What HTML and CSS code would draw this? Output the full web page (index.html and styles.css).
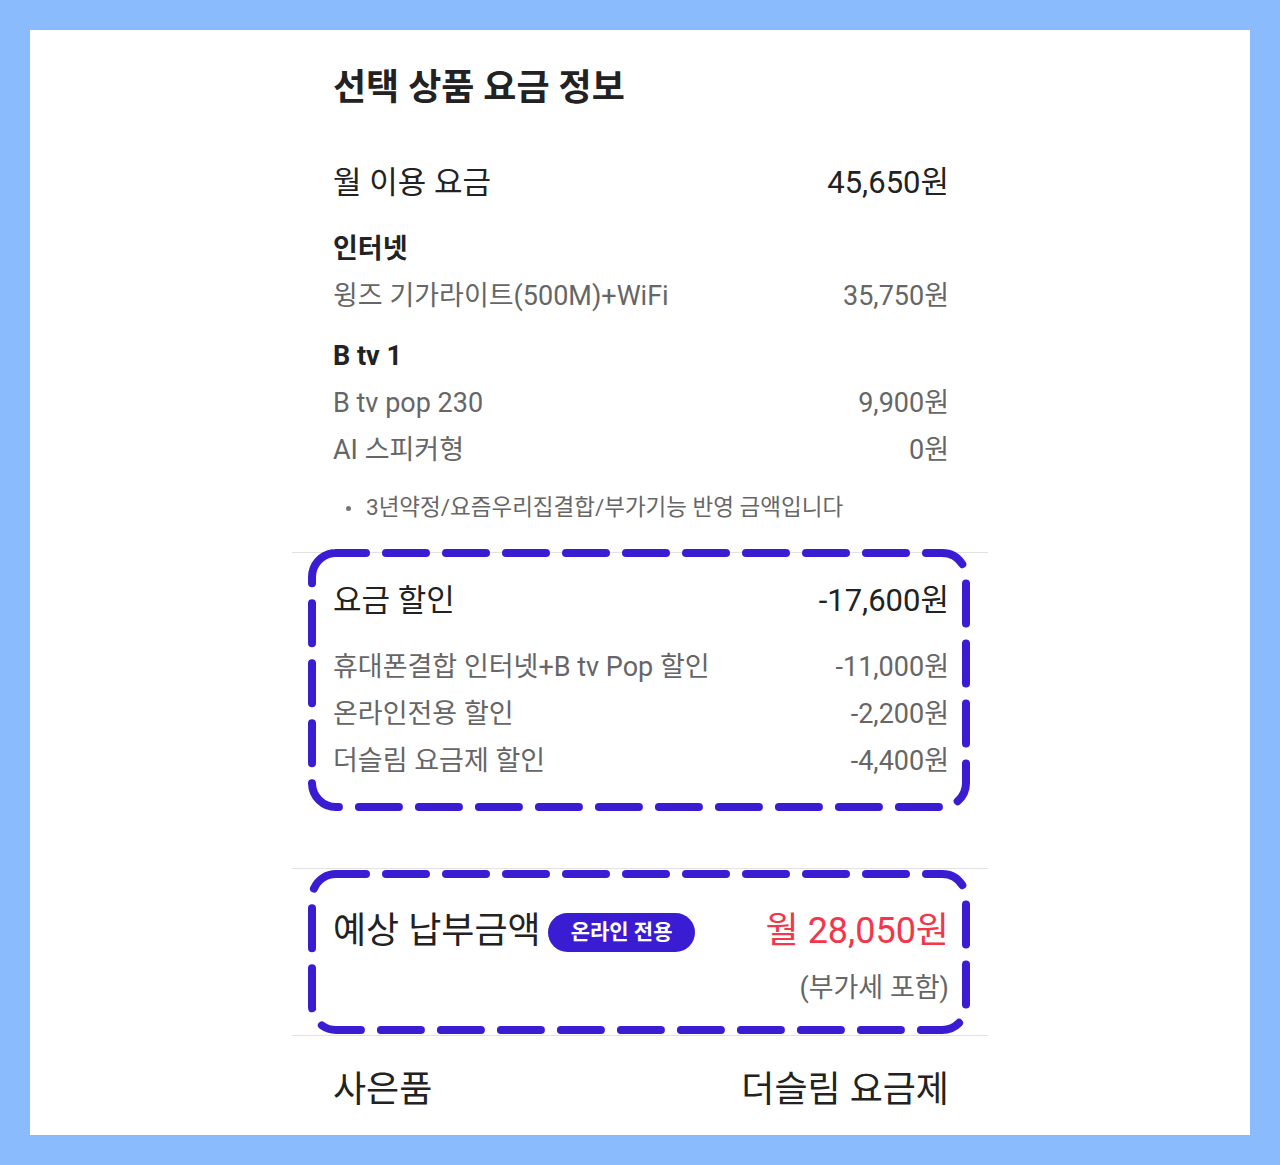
FILE: index.html
```html
<!DOCTYPE html>
<html lang="ko">
<head>
<meta charset="utf-8">
<link rel="stylesheet" href="styles.css">
</head>
<body>
<div class="frame">
  <div class="panel">
    <div class="box">
      <h1 class="title">선택 상품 요금 정보</h1>

      <div class="row main mt-month"><span>월 이용 요금</span><span>45,650원</span></div>

      <div class="group-head mt-net">인터넷</div>
      <div class="row sub mt-first"><span>윙즈 기가라이트(500M)+WiFi</span><span>35,750원</span></div>

      <div class="group-head mt-btv">B tv 1</div>
      <div class="row sub mt-first"><span>B tv pop 230</span><span>9,900원</span></div>
      <div class="row sub"><span>AI 스피커형</span><span>0원</span></div>

      <ul class="note"><li>3년약정/요즘우리집결합/부가기능 반영 금액입니다</li></ul>

      <section class="discount">
        <svg class="dash dash-1" aria-hidden="true"><rect x="0" y="0" width="100%" height="100%" rx="24" ry="24"/></svg>
        <div class="row main"><span>요금 할인</span><span>-17,600원</span></div>
        <div class="row sub mt-disc"><span>휴대폰결합 인터넷+B tv Pop 할인</span><span>-11,000원</span></div>
        <div class="row sub"><span>온라인전용 할인</span><span>-2,200원</span></div>
        <div class="row sub"><span>더슬림 요금제 할인</span><span>-4,400원</span></div>
      </section>

      <section class="total">
        <svg class="dash dash-2" aria-hidden="true"><rect x="0" y="0" width="100%" height="100%" rx="24" ry="24"/></svg>
        <div class="row total-row">
          <div class="total-label"><span>예상 납부금액</span><span class="badge">온라인 전용</span></div>
          <span class="total-price">월 28,050원</span>
        </div>
        <div class="vat">(부가세 포함)</div>
      </section>

      <div class="row main gift"><span>사은품</span><span>더슬림 요금제</span></div>
    </div>
  </div>
</div>
</body>
</html>
```

FILE: styles.css
```css
* { box-sizing: border-box; }
html, body { margin: 0; padding: 0; }
body {
  background: #8abbfc;
  font-family: Roboto, "Noto Sans CJK KR", sans-serif;
  color: #222;
}
.frame {
  width: 1280px;
  height: 1165px;
  padding: 30px;
}
.panel {
  background: #fff;
  height: 1105px;
  padding-top: 38px;
  padding-left: 262px;
  overflow: hidden;
}
.box {
  width: 696px;
  padding: 0 39px 0 41px;
}
.title {
  margin: 0;
  font-size: 36px;
  line-height: 40px;
  font-weight: 700;
  color: #222;
}
.row {
  display: flex;
  justify-content: space-between;
  align-items: center;
  white-space: nowrap;
}
.main {
  font-size: 31px;
  line-height: 40px;
  color: #222;
}
.sub {
  font-size: 27px;
  line-height: 47px;
  color: #666;
}
.group-head {
  font-size: 27px;
  line-height: 40px;
  font-weight: 700;
  color: #222;
}
.mt-month { margin-top: 55px; }
.mt-net { margin-top: 26px; }
.mt-btv { margin-top: 16px; }
.mt-first { margin-top: 4px; }
.note {
  margin: 18px 0 0 0;
  padding: 0 0 0 33px;
  font-size: 22.5px;
  line-height: 30px;
  color: #666;
  list-style: none;
}
.note li { position: relative; }
.note li::before {
  content: "";
  position: absolute;
  left: -20px;
  top: 14px;
  width: 5px;
  height: 5px;
  border-radius: 50%;
  background: #777;
}
.discount {
  position: relative;
  margin: 30px -39px 0 -41px;
  padding: 28px 39px 26px 41px;
  border-top: 1px solid #e2e2e2;
}
.mt-disc { margin-top: 23px; }
.total {
  position: relative;
  margin: 57px -39px 0 -41px;
  padding: 40px 39px 32px 41px;
  border-top: 1px solid #e2e2e2;
  border-bottom: 1px solid #e2e2e2;
}
.dash {
  position: absolute;
  overflow: visible;
  fill: none;
  stroke: #3a1dd3;
  stroke-width: 8;
  stroke-dasharray: 40 20;
  stroke-dashoffset: 10;
  stroke-linecap: round;
  pointer-events: none;
  left: 20px;
  width: 654px;
}
.dash-1 {
  top: 0;
  height: 254px;
}
.dash-2 {
  top: 5px;
  height: 156px;
}
.total-row {
  line-height: 44px;
}
.total-label {
  display: flex;
  align-items: center;
  font-size: 36px;
  color: #222;
}
.badge {
  margin-left: 7px;
  margin-top: 3px;
  height: 39px;
  padding: 0 23px;
  border-radius: 20px;
  background: #3a1dd3;
  color: #fff;
  font-size: 21px;
  font-weight: 700;
  line-height: 39px;
}
.total-price {
  font-size: 36px;
  color: #f3364a;
}
.vat {
  margin-top: 20px;
  text-align: right;
  font-size: 27px;
  line-height: 30px;
  color: #666;
}
.gift {
  margin-top: 34px;
  font-size: 36px;
}
```
